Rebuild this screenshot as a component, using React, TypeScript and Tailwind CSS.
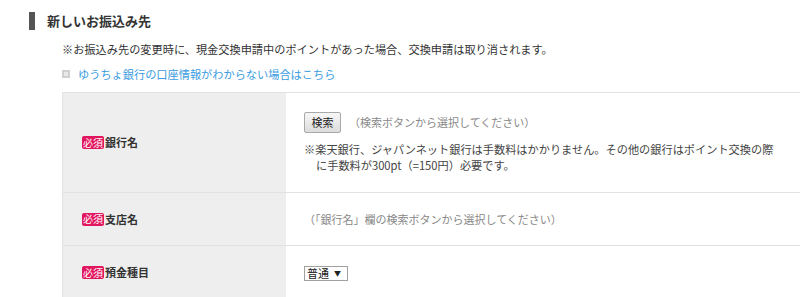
import React from "react";

const font = { fontFamily: '"Noto Sans CJK JP", "Noto Sans", sans-serif' };

function Badge() {
  return (
    <span className="inline-flex items-center justify-center w-[22px] h-[13px] rounded-[2px] bg-[#e2165e] text-white text-[10px] leading-none mr-[1px]">
      必須
    </span>
  );
}

function Label({ children }: { children: React.ReactNode }) {
  return (
    <div className="w-[223px] shrink-0 bg-[#eeeeee] flex items-center pl-[19px]">
      <Badge />
      <span className="text-[11px] font-bold text-[#333]">{children}</span>
    </div>
  );
}

export default function App() {
  return (
    <div className="w-[800px] h-[297px] overflow-hidden bg-white text-[#333]" style={font}>
      <div className="flex items-center pt-[12px] pl-[29px]">
        <div className="w-[6px] h-[18px] bg-[#555]" />
        <h2 className="ml-[12px] text-[13px] font-bold leading-[18px] text-[#333]">新しいお振込み先</h2>
      </div>
      <p className="mt-[11px] ml-[62px] text-[11.2px] leading-[16px] text-[#333]">
        ※お振込み先の変更時に、現金交換申請中のポイントがあった場合、交換申請は取り消されます。
      </p>
      <div className="mt-[9px] ml-[62px] flex items-center">
        <div className="w-[8px] h-[8px] bg-[#d0d0d0] flex items-center justify-center">
          <div className="w-[4px] h-[4px] bg-[#e8e8e8]" />
        </div>
        <a className="ml-[8px] text-[11.2px] leading-[16px] text-[#3a9be0]">ゆうちょ銀行の口座情報がわからない場合はこちら</a>
      </div>
      <div className="mt-[10px] ml-[62px] border-l border-t border-[#e2e2e2]">
        <div className="flex h-[100px] border-b border-[#e2e2e2]">
          <Label>銀行名</Label>
          <div className="flex-1 pl-[18px] pt-[19px]">
            <div className="flex items-center">
              <div className="w-[37px] h-[21px] border border-[#a9a9a9] rounded-[2px] bg-gradient-to-b from-[#f7f7f7] to-[#dcdcdc] flex items-center justify-center text-[11px] text-[#222]">
                検索
              </div>
              <span className="ml-[8px] text-[11px] text-[#888]">（検索ボタンから選択してください）</span>
            </div>
            <p className="mt-[8px] text-[11.2px] leading-[16px] text-[#444] pl-[12px] -indent-[12px] w-[475px]">
              ※楽天銀行、ジャパンネット銀行は手数料はかかりません。その他の銀行はポイント交換の際に手数料が300pt（=150円）必要です。
            </p>
          </div>
        </div>
        <div className="flex h-[53px] border-b border-[#e2e2e2]">
          <Label>支店名</Label>
          <div className="flex-1 pl-[18px] flex items-center">
            <span className="text-[11px] text-[#888]">（「銀行名」欄の検索ボタンから選択してください）</span>
          </div>
        </div>
        <div className="flex h-[53px]">
          <Label>預金種目</Label>
          <div className="flex-1 pl-[18px] pt-[20px] flex items-start">
            <div className="flex items-center w-[44px] h-[15px] border border-[#a0a0a0] bg-white pl-[2px] text-[11px] leading-none text-[#222]">
              普通
              <span className="ml-[5px] text-[7px]">▼</span>
            </div>
          </div>
        </div>
      </div>
    </div>
  );
}
